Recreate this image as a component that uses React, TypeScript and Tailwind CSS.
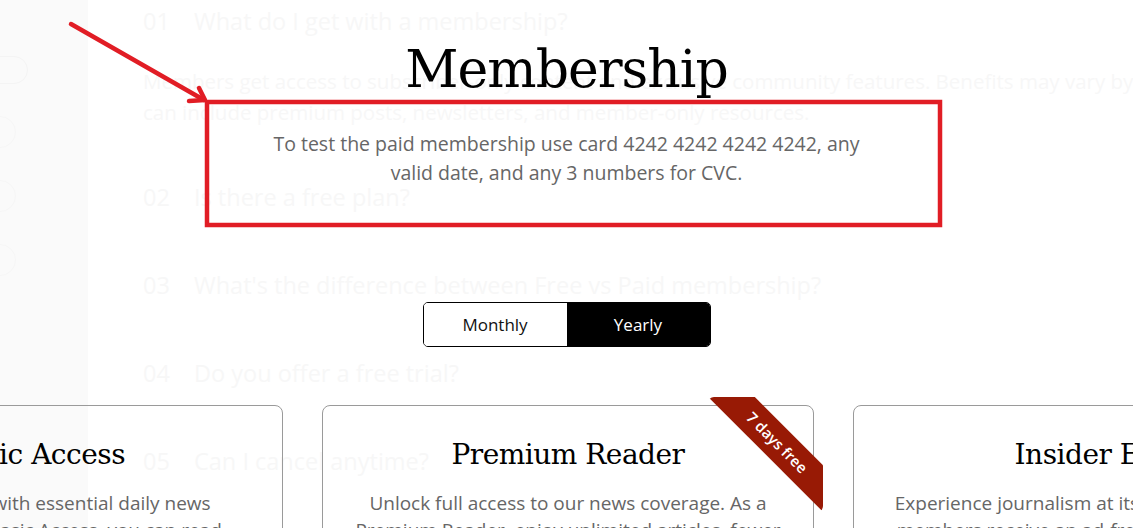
const faqs = [
  { n: "02", q: "Is there a free plan?" },
  { n: "03", q: "What's the difference between Free vs Paid membership?" },
  { n: "04", q: "Do you offer a free trial?" },
  { n: "05", q: "Can I cancel anytime?" },
];

const plans = [
  {
    name: "Basic Access",
    lines: ["Stay informed with essential daily news", "coverage. With Basic Access, you can read", "a limited number of articles each month."],
  },
  {
    name: "Premium Reader",
    lines: ["Unlock full access to our news coverage. As a", "Premium Reader, enjoy unlimited articles, fewer", "ads and exclusive newsletters."],
    ribbon: "7 days free",
  },
  {
    name: "Insider Elite",
    lines: ["Experience journalism at its finest. Our Insider", "members receive an ad-free experience, early", "access and special events."],
  },
];

function GhostPage() {
  // the page behind the modal, seen through the white overlay
  return (
    <div className="absolute inset-0 flex font-['Open_Sans',sans-serif] text-[23.5px] leading-[31px] text-[#f7f7f7]">
      <div className="w-[88px] shrink-0 bg-[#fafafa] flex flex-col items-start gap-8 pt-[56px]">
        <div className="-ml-4 w-11 h-7 rounded-full border border-[#f4f4f4]" />
        <div className="-ml-4 w-8 h-8 rounded-full border border-[#f6f6f6]" />
        <div className="-ml-4 w-8 h-8 rounded-full border border-[#f6f6f6]" />
        <div className="-ml-4 w-8 h-8 rounded-full border border-[#f6f6f6]" />
      </div>
      <div className="pl-[55px] pt-[6px] flex flex-col whitespace-nowrap">
        <div className="flex">
          <span className="w-[51px]">01</span>
          <span>What do I get with a membership?</span>
        </div>
        <p className="mt-[29px] text-[20.5px]">
          Members get access to subscriber-only content and exclusive community features. Benefits may vary by plan and
          <br />
          can include premium posts, newsletters, and member-only resources.
        </p>
        {faqs.map((f, i) => (
          <div key={f.n} className={`flex ${i === 0 ? "mt-[54px]" : "mt-[57px]"}`}>
            <span className="w-[51px]">{f.n}</span>
            <span>{f.q}</span>
          </div>
        ))}
      </div>
    </div>
  );
}

function Annotation() {
  return (
    <svg className="absolute inset-0 pointer-events-none" width="1133" height="528" viewBox="0 0 1133 528">
      <g stroke="#e11d25" strokeWidth="4.5" fill="none" strokeLinecap="round" strokeLinejoin="round">
        <line x1="71" y1="24" x2="204" y2="100" />
        <polyline points="199,88 205,100 189,101" />
        <rect x="207" y="102" width="733" height="123" strokeLinecap="butt" strokeLinejoin="miter" />
      </g>
    </svg>
  );
}

export default function App() {
  return (
    <div className="relative w-full h-[528px] overflow-hidden bg-white font-['Open_Sans',sans-serif]">
      <GhostPage />

      <div className="relative flex flex-col items-center">
        <h1 className="mt-[33px] font-['DejaVu_Serif',serif] text-[52px] leading-[72px] font-normal text-black tracking-[-1px]">
          Membership
        </h1>
        <p className="mt-6 w-[600px] text-center text-[19.5px] leading-[29px] text-[#666]">
          To test the paid membership use card 4242 4242 4242 4242, any valid date, and any 3 numbers for CVC.
        </p>

        <div className="mt-[115px] flex w-[288px] h-[45px] rounded-[5px] border border-black overflow-hidden text-[17px] font-medium">
          <button className="flex-1 bg-white text-[#111]">Monthly</button>
          <button className="flex-1 bg-black text-white">Yearly</button>
        </div>

        <div className="mt-[58px] flex justify-center gap-[39px] w-full pl-[3px]">
          {plans.map((p) => (
            <div
              key={p.name}
              className="relative w-[492px] shrink-0 h-[300px] rounded-lg border border-[#9a9a9a] px-5 pt-[29px] text-center"
            >
              {p.ribbon && (
                <div className="absolute -top-[9px] -right-[10px] w-[115px] h-[115px] overflow-hidden rounded-md">
                  <div className="absolute left-[-16px] top-[29px] w-[170px] h-[33px] rotate-45 bg-[#981a05] flex items-center justify-center text-white text-[15px] font-semibold">
                    {p.ribbon}
                  </div>
                </div>
              )}
              <h2 className="font-['DejaVu_Serif',serif] text-[28px] leading-[40px] text-black tracking-[-0.5px]">
                {p.name}
              </h2>
              <p className="mt-[15px] text-[19px] leading-[27px] text-[#666]">
                {p.lines.map((l) => (
                  <span key={l} className="block whitespace-nowrap">
                    {l}
                  </span>
                ))}
              </p>
            </div>
          ))}
        </div>
      </div>

      <Annotation />
    </div>
  );
}
